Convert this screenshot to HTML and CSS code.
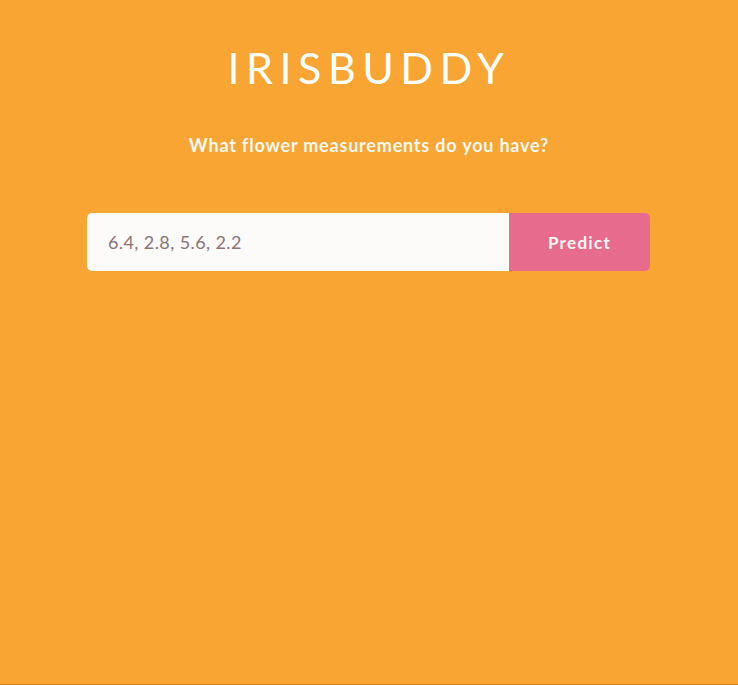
FILE: index.html
```html
<!DOCTYPE html>
<html>
<head>
<meta charset="utf-8">
<link rel="stylesheet" href="styles.css">
</head>
<body>
<main class="page">
  <h1 class="title">IRISBUDDY</h1>
  <p class="question">What flower measurements do you have?</p>
  <form class="search">
    <input class="search-input" type="text" placeholder="6.4, 2.8, 5.6, 2.2">
    <button class="search-btn" type="button">Predict</button>
  </form>
</main>
</body>
</html>
```

FILE: styles.css
```css
* { box-sizing: border-box; }
html, body { margin: 0; padding: 0; height: 100%; }
body {
  background: #f8a534;
  font-family: Lato, "Open Sans", sans-serif;
  border-bottom: 1px solid #c9862a;
}
.page {
  display: flex;
  flex-direction: column;
  align-items: center;
  padding-top: 41px;
}
.title {
  margin: 0;
  font-weight: 400;
  font-size: 43px;
  line-height: 54px;
  letter-spacing: 6.5px;
  color: #fff;
}
.question {
  margin: 37px 0 0;
  font-weight: 700;
  font-size: 18px;
  line-height: 26px;
  color: #fff8ee;
  letter-spacing: 0.8px;
}
.search {
  margin-top: 55px;
  margin-right: 1px;
  display: flex;
  width: 563px;
  height: 58px;
}
.search-input {
  flex: 1;
  border: none;
  border-radius: 5px 0 0 5px;
  background: #fdfbfa;
  padding: 0 21px;
  font-family: Lato, sans-serif;
  font-size: 18px;
  letter-spacing: 0.4px;
  color: #7a6a6a;
  outline: none;
}
.search-input::placeholder { color: #8a7474; opacity: 1; }
.search-btn {
  width: 141px;
  border: none;
  border-radius: 0 5px 5px 0;
  background: #e76c8c;
  color: #fff6f0;
  font-family: Lato, sans-serif;
  font-weight: 700;
  font-size: 17px;
  letter-spacing: 1.3px;
  padding: 0;
}
```
